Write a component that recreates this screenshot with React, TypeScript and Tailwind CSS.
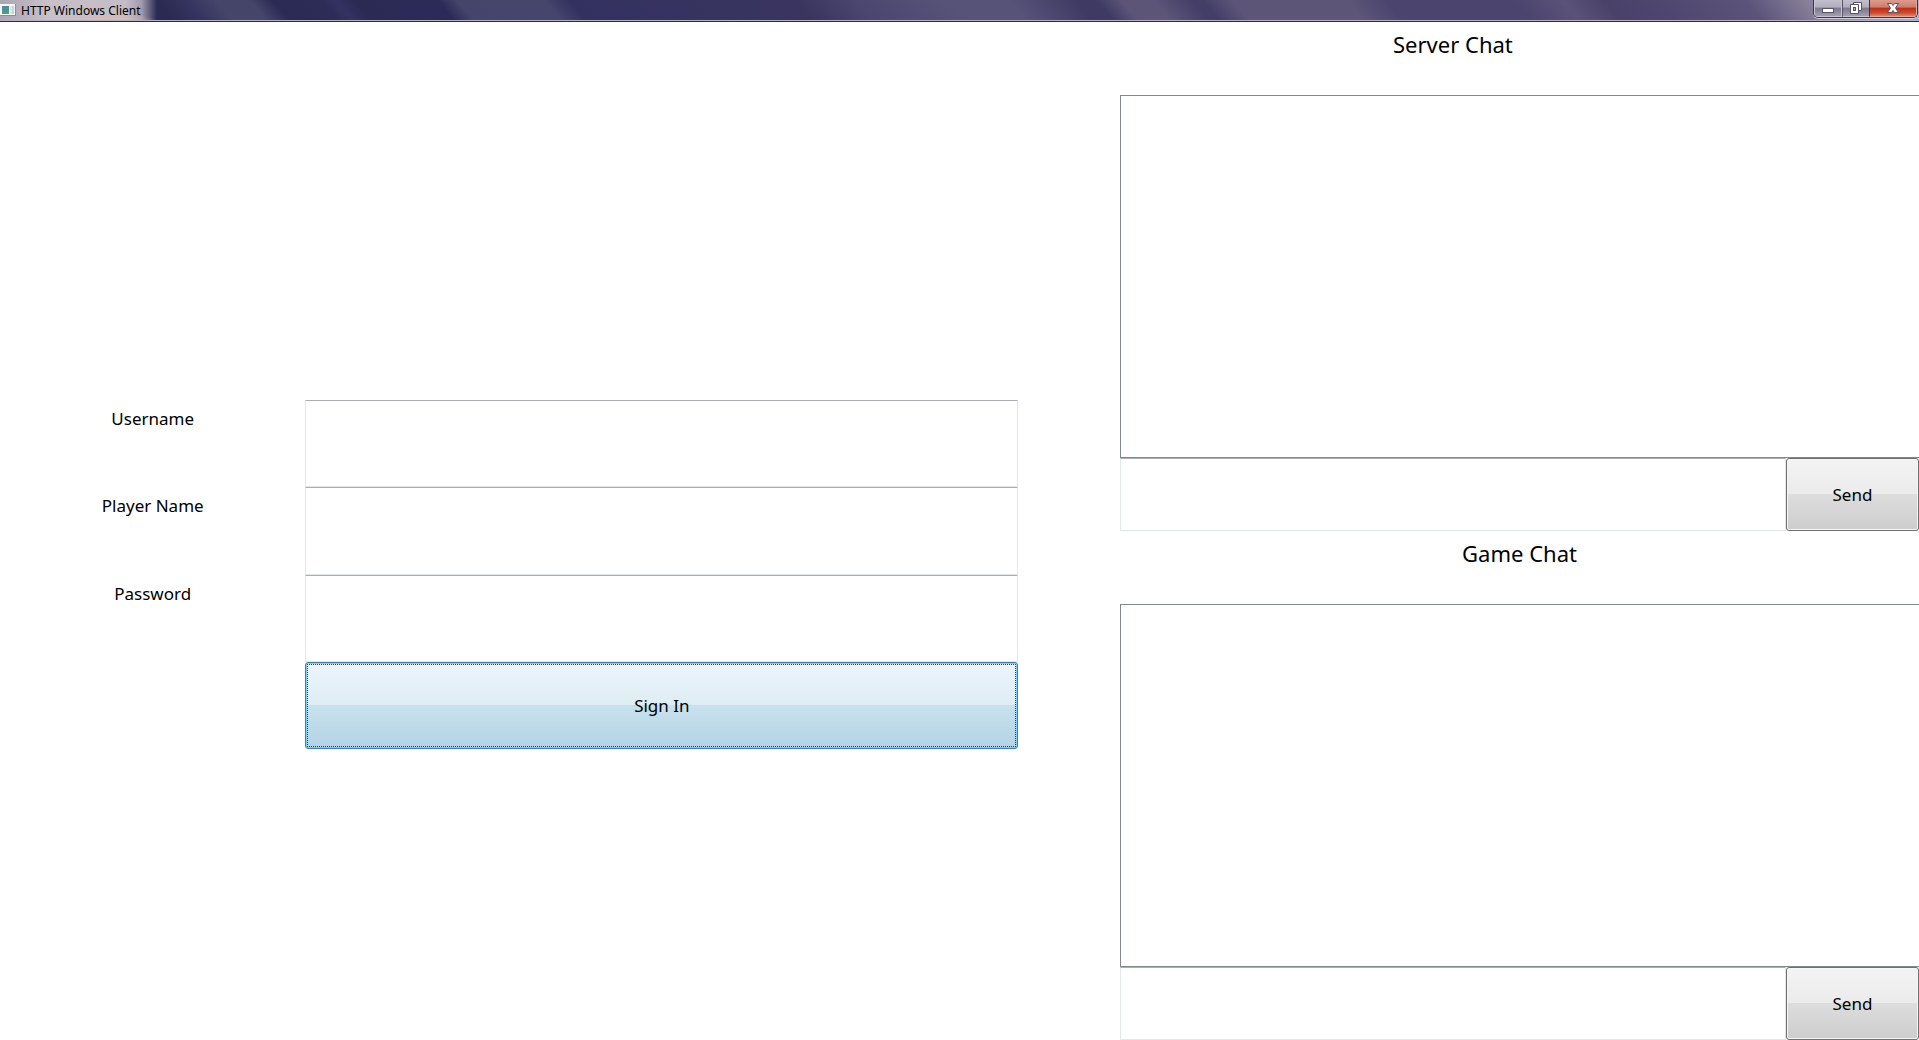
import type { ReactNode } from "react";

function AppIcon() {
  return (
    <svg className="h-3 w-4 shrink-0" viewBox="0 0 16 12" aria-hidden="true">
      <defs>
        <linearGradient id="pane" x1="0" y1="0" x2="0" y2="1">
          <stop offset="0" stopColor="#4d86ab" />
          <stop offset="1" stopColor="#4fa06f" />
        </linearGradient>
      </defs>
      <rect x="0" y="0" width="16" height="12" fill="#8f8c95" />
      <rect x="0" y="0" width="15" height="11" fill="#f4f6f8" />
      <rect x="2" y="2" width="7" height="8" fill="url(#pane)" />
      <rect x="10" y="2" width="2" height="8" fill="#dbe6e6" />
      <rect x="12" y="2" width="2" height="8" fill="#c2d6d8" />
    </svg>
  );
}

function CaptionButtons() {
  const shine = "bg-[linear-gradient(#c3bfcd_0%,#b1acbd_45%,#7d778f_50%,#a29db0_100%)]";
  return (
    <div className="mr-px flex h-[18px] overflow-hidden rounded-b-[5px] border-x border-b border-[#3b3549] shadow-[0_1px_0_#d2cedb]">
      <button
        type="button"
        aria-label="Minimize"
        className={`flex w-7 items-center justify-center border-x border-b border-[#c9c5d2] ${shine}`}
      >
        <svg className="h-4 w-4" viewBox="0 0 16 16" aria-hidden="true">
          <rect x="2.5" y="8.5" width="11" height="4" fill="#fff" stroke="#555568" />
        </svg>
      </button>
      <button
        type="button"
        aria-label="Restore"
        className={`flex w-[27px] items-center justify-center border-b border-l border-[#c9c5d2] border-l-[#595368] ${shine}`}
      >
        <svg className="h-4 w-4" viewBox="0 0 16 16" aria-hidden="true">
          <path d="M5.5 2.5h8v8h-8z" fill="#fff" stroke="#555568" />
          <path d="M2.5 4.5h8v9h-8z" fill="#fff" stroke="#555568" />
          <rect x="5.5" y="7.5" width="2" height="3" fill="#a9a5b8" stroke="#555568" />
        </svg>
      </button>
      <button
        type="button"
        aria-label="Close"
        className="flex w-12 items-center justify-center border-x border-b border-[#e2a79c] border-l-[#5f2226] bg-[linear-gradient(#dc9b8f_0%,#d07c6c_45%,#b5301a_50%,#cf4a2c_80%,#dd8168_100%)]"
      >
        <svg className="h-4 w-4" viewBox="0 0 16 16" aria-hidden="true">
          <path
            d="M2.5 3.5h4L8 5.500l1.500-2h4L10.500 8l3 4.500h-4L8 10.500l-1.500 2h-4L5.500 8z"
            fill="#fff"
            stroke="#5b4f60"
          />
        </svg>
      </button>
    </div>
  );
}

function TitleBar() {
  return (
    <header className="flex h-[22px] shrink-0 items-start justify-between border-b border-[#2c2946] bg-[linear-gradient(50deg,#2a2a52_0%,#2a2a52_9%,#343460_10.500%,#454469_12%,#454469_13.800%,#2b2a55_15%,#2d2c57_17.500%,#343262_18.200%,#2a2a54_19.200%,#2c2b58_23.500%,#45446b_24.500%,#46456c_29%,#33315f_30.300%,#39355f_42%,#4a466f_45%,#575378_50%,#575378_53%,#3f3a64_56.500%,#3f3a64_57.500%,#5c5578_58.800%,#5c5578_60.500%,#433e67_62.500%,#433e67_63%,#5c5578_64.500%,#5c5578_70.500%,#4b446e_72.500%,#4b446e_79%,#5a5278_81.600%,#4a4169_83.700%,#4d456d_86%,#5b5379_91%,#8c859d_94.500%,#b9b3c4_100%)]">
      <div className="flex h-[21px] flex-1 items-start justify-between border-b border-[#b4afc3]">
        <div className="flex h-5 items-center bg-[radial-gradient(ellipse_at_70%_110%,#dcbcb0_0%,transparent_30%),linear-gradient(90deg,#aaa5b2_0%,#c9c0c9_30%,#c4bcc6_80%,#a39cae_90%,transparent_100%)] pr-4">
          <AppIcon />
          <h1 className="ml-[5px] pt-px text-[12px] leading-5 text-black">HTTP Windows Client</h1>
        </div>
        <CaptionButtons />
      </div>
    </header>
  );
}

const fieldBorder = "border border-[#e3e6ec] border-t-[#abadb3] bg-white outline-none";

function Field({ id, label, type = "text" }: { id: string; label: string; type?: string }) {
  return (
    <>
      <label htmlFor={id} className="col-start-1 pt-[7px] text-center text-[17px] leading-6">
        {label}
      </label>
      <input id={id} type={type} className={`col-start-2 min-w-0 rounded-[1px] px-2 text-[17px] ${fieldBorder}`} />
    </>
  );
}

function SignInForm() {
  return (
    <form
      onSubmit={(e) => e.preventDefault()}
      className="grid min-w-0 grid-cols-[3fr_7fr_1fr] grid-rows-[13fr_3fr_3fr_3fr_3fr_10fr]"
    >
      <div className="col-span-3" />
      <Field id="username" label="Username" />
      <Field id="player" label="Player Name" />
      <Field id="password" label="Password" type="password" />
      <button
        type="submit"
        className="col-start-2 rounded-[3px] border border-[#3c7fb1] bg-[linear-gradient(#ecf4fc_0%,#deedf3_49%,#c8e1ee_50%,#b3d3e5_100%)] text-[17px] shadow-[inset_0_0_0_1px_#7cd3f7]"
      >
        <span className="m-px flex h-[calc(100%-2px)] items-center justify-center border border-dotted border-[#333a40]">
          Sign In
        </span>
      </button>
    </form>
  );
}

function Chat({ id, title }: { id: string; title: ReactNode }) {
  return (
    <section aria-labelledby={id} className="grid min-h-0 grid-cols-[5fr_1fr] grid-rows-[1fr_5fr_1fr]">
      {title}
      <textarea
        readOnly
        aria-labelledby={id}
        className="col-span-2 resize-none border border-r-0 border-[#828790] bg-white p-1 outline-none"
      />
      <input aria-label="Message" className={`min-w-0 rounded-[1px] px-2 text-[17px] ${fieldBorder}`} />
      <button
        type="button"
        className="rounded-[3px] border border-[#707070] bg-[linear-gradient(#f3f3f3_0%,#ebebeb_50%,#dddddd_50%,#cdcdcd_100%)] pt-px text-[17px] shadow-[inset_0_0_0_1px_#f6f6f6]"
      >
        Send
      </button>
    </section>
  );
}

export default function App() {
  return (
    <div className="flex h-screen flex-col bg-white font-['Noto_Sans','Open_Sans',sans-serif] text-black">
      <TitleBar />
      <main className="grid min-h-0 flex-1 grid-cols-[1120fr_799fr]">
        <SignInForm />
        <div className="grid min-h-0 min-w-0 grid-rows-2">
          <Chat
            id="server-chat"
            title={
              <>
                <h2 id="server-chat" className="pt-[6px] text-center text-[22px] leading-8">
                  Server Chat
                </h2>
                <div />
              </>
            }
          />
          <Chat
            id="game-chat"
            title={
              <h2 id="game-chat" className="col-span-2 pt-[6px] text-center text-[22px] leading-8">
                Game Chat
              </h2>
            }
          />
        </div>
      </main>
    </div>
  );
}
